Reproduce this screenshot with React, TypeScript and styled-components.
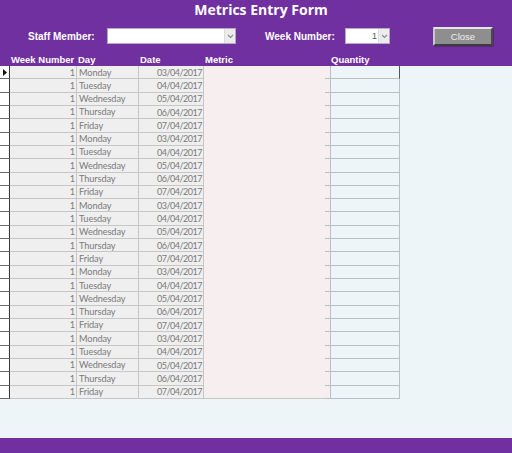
import React from "react";
import styled, { createGlobalStyle } from "styled-components";

const PURPLE = "#7030a0";
const COLS = "10px 67px 62px 65px 126px 70px";

const GlobalStyle = createGlobalStyle`
  html, body { margin: 0; padding: 0; background: #eef5f8; }
  * { box-sizing: border-box; }
`;

const Page = styled.div`
  width: 512px;
  height: 453px;
  display: flex;
  flex-direction: column;
  background: #eef5f8;
  overflow: hidden;
`;

const Header = styled.div`
  background: ${PURPLE};
  display: flex;
  flex-direction: column;
`;

const Title = styled.div`
  height: 19px;
  display: flex;
  align-items: center;
  justify-content: center;
  padding-left: 10px;
  color: #ffffff;
  font-family: "Open Sans", sans-serif;
  font-weight: 700;
  font-size: 14px;
  line-height: 1;
`;

const Controls = styled.div`
  height: 34px;
  display: flex;
  align-items: center;
  padding-left: 28px;
`;

const Label = styled.span<{ $w: number }>`
  width: ${(p) => p.$w}px;
  color: #ffffff;
  font-family: "Liberation Sans", Arial, sans-serif;
  font-weight: 700;
  font-size: 10px;
  white-space: nowrap;
`;

const Combo = styled.div<{ $w: number }>`
  width: ${(p) => p.$w}px;
  height: 16px;
  background: #ffffff;
  border: 1px solid #b9a7c9;
  display: flex;
  align-items: stretch;
`;

const Spacer = styled.div<{ $w: number }>`
  width: ${(p) => p.$w}px;
  flex: none;
`;

const ComboText = styled.div`
  flex: 1;
  font-family: "Liberation Sans", Arial, sans-serif;
  font-size: 9px;
  color: #555;
  display: flex;
  align-items: center;
  justify-content: flex-end;
  padding-right: 1px;
`;

const ComboArrow = styled.div`
  width: 11px;
  background: #ececec;
  border-left: 1px solid #dcdcdc;
  display: flex;
  align-items: center;
  justify-content: center;
`;

const CloseButton = styled.button`
  width: 60px;
  height: 19px;
  padding: 0;
  background: #8e8e8e;
  border-top: 2px solid #e6e6e6;
  border-left: 2px solid #c8c8c8;
  border-right: 2px solid #4a4a4a;
  border-bottom: 2px solid #3e3e3e;
  border-radius: 1px;
  color: #efefef;
  font-family: "Liberation Sans", Arial, sans-serif;
  font-size: 9.5px;
  box-shadow: 1px 1px 0 #5a2580;
`;

const HeadRow = styled.div`
  height: 13px;
  display: grid;
  grid-template-columns: ${COLS};
  align-items: center;
`;

const HeadCell = styled.div`
  color: #ffffff;
  font-family: "Liberation Sans", Arial, sans-serif;
  font-weight: 700;
  font-size: 9.5px;
  padding-left: 1px;
  white-space: nowrap;
  line-height: 1;
`;

const Body = styled.div`
  flex: 1;
  background: #eef5f8;
`;

const Grid = styled.div`
  width: 400px;
  display: grid;
  grid-template-columns: ${COLS};
  grid-auto-rows: 13.32px;
`;

const Selector = styled.div`
  background: #ffffff;
  border-right: 1px solid #3a3a3a;
  border-bottom: 1px solid #6a6a6a;
  display: flex;
  align-items: center;
  padding-left: 3px;
`;

const Cell = styled.div<{ $align: "left" | "right"; $tight?: boolean }>`
  background: #efefef;
  border-right: 1px solid #c6c6c6;
  border-bottom: 1px solid #c6c6c6;
  font-family: Lato, "Open Sans", sans-serif;
  font-size: ${(p) => (p.$tight ? "9px" : "9.2px")};
  letter-spacing: ${(p) => (p.$tight ? "-0.5px" : "-0.1px")};
  color: #7a7a7a;
  display: flex;
  align-items: center;
  justify-content: ${(p) => (p.$align === "right" ? "flex-end" : "flex-start")};
  padding: 0 ${(p) => (p.$align === "right" ? "1px" : "0")} 0 ${(p) => (p.$align === "right" ? "0" : "2px")};
  white-space: nowrap;
  overflow: hidden;
  line-height: 1;
`;

const MetricCell = styled.div<{ $last: boolean }>`
  background: #f6eeef;
  border-bottom: ${(p) => (p.$last ? "1px solid #c6c6c6" : "none")};
`;

const QuantityCell = styled.div<{ $cursor: boolean }>`
  background: #edf5f9;
  border-left: 1px solid #b7c0c4;
  border-right: 1px solid ${(p) => (p.$cursor ? "#555555" : "#b7c0c4")};
  border-bottom: 1px solid #b7c0c4;
  position: relative;
  &::before {
    content: "";
    position: absolute;
    left: -6px;
    bottom: -1px;
    width: 6px;
    height: 1px;
    background: #b7c0c4;
  }
`;

const Footer = styled.div`
  height: 15px;
  background: ${PURPLE};
`;

const Chevron = () => (
  <svg width="7" height="5" viewBox="0 0 7 5">
    <path d="M1 1 L3.5 3.5 L6 1" fill="none" stroke="#8a8a8a" strokeWidth="1.1" />
  </svg>
);

const Triangle = () => (
  <svg width="4" height="7" viewBox="0 0 4 7">
    <path d="M0 0 L4 3.5 L0 7 Z" fill="#111" />
  </svg>
);

const days = ["Monday", "Tuesday", "Wednesday", "Thursday", "Friday"];
const dates = ["03/04/2017", "04/04/2017", "05/04/2017", "06/04/2017", "07/04/2017"];

const rows = Array.from({ length: 25 }, (_, i) => ({
  week: 1,
  day: days[i % 5],
  date: dates[i % 5],
}));

export default function App() {
  return (
    <Page>
      <GlobalStyle />
      <Header>
        <Title>Metrics Entry Form</Title>
        <Controls>
          <Label $w={79}>Staff Member:</Label>
          <Combo $w={129}>
            <ComboText />
            <ComboArrow>
              <Chevron />
            </ComboArrow>
          </Combo>
          <Spacer $w={29} />
          <Label $w={80}>Week Number:</Label>
          <Combo $w={45}>
            <ComboText>1</ComboText>
            <ComboArrow>
              <Chevron />
            </ComboArrow>
          </Combo>
          <Spacer $w={43} />
          <CloseButton>Close</CloseButton>
        </Controls>
        <HeadRow>
          <span />
          <HeadCell>Week Number</HeadCell>
          <HeadCell>Day</HeadCell>
          <HeadCell>Date</HeadCell>
          <HeadCell>Metric</HeadCell>
          <HeadCell>Quantity</HeadCell>
        </HeadRow>
      </Header>
      <Body>
        <Grid>
          {rows.map((r, i) => (
            <React.Fragment key={i}>
              <Selector>{i === 0 ? <Triangle /> : null}</Selector>
              <Cell $align="right">{r.week}</Cell>
              <Cell $align="left">{r.day}</Cell>
              <Cell $align="right" $tight>
                {r.date}
              </Cell>
              <MetricCell $last={i === rows.length - 1} />
              <QuantityCell $cursor={i === 0} />
            </React.Fragment>
          ))}
        </Grid>
      </Body>
      <Footer />
    </Page>
  );
}
